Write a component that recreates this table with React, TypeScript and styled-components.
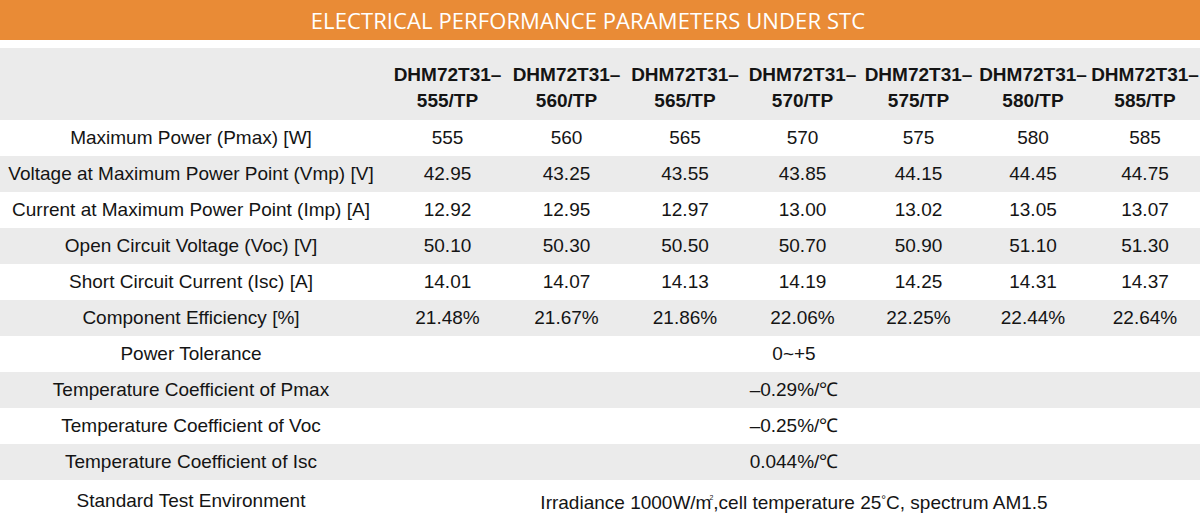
import { createGlobalStyle } from "styled-components"
import styled from "styled-components"

const GlobalStyle = createGlobalStyle`
  html, body {
    margin: 0;
    padding: 0;
    background: #ffffff;
  }
  body {
    font-family: "Liberation Sans", Arial, sans-serif;
    color: #141414;
  }
`

const Page = styled.div`
  width: 1200px;
  height: 520px;
  overflow: hidden;
  background: #fff;
`

const TitleBar = styled.div`
  height: 40px;
  background: #e98b36;
  display: flex;
  align-items: center;
  justify-content: center;
  padding-right: 24px;
  box-sizing: border-box;
`

const Title = styled.h1`
  margin: 0;
  font-family: "Open Sans", "Noto Sans", sans-serif;
  font-weight: 400;
  font-size: 22px;
  color: #fff;
  letter-spacing: 0.1px;
`

const Table = styled.table`
  margin-top: 8px;
  width: 1200px;
  border-collapse: collapse;
  table-layout: fixed;
`

const HeadRow = styled.tr`
  background: #ebebeb;
  height: 72px;
`

const HeadCell = styled.th`
  padding: 14px 0 6px;
  font-size: 19px;
  font-weight: 700;
  line-height: 26px;
  text-align: center;
  white-space: nowrap;
  vertical-align: top;
`

const Row = styled.tr<{ $shade?: boolean }>`
  height: 36px;
  background: ${props => (props.$shade ? "#ebebeb" : "#ffffff")};
`

const Cell = styled.td<{ $label?: boolean }>`
  padding: 0 ${props => (props.$label ? "6px" : "0")} 0 0;
  font-size: 19px;
  line-height: 36px;
  text-align: center;
  white-space: nowrap;
`

const Sup = styled.sup`
  font-size: 7px;
  vertical-align: 9px;
  margin-left: -2px;
`

const Deg = styled.span`
  font-size: 12px;
  vertical-align: 5px;
`

const colWidths = [388, 119, 119, 118, 117, 115, 114, 110]
const models = ["555", "560", "565", "570", "575", "580", "585"]

interface ParamRow {
  label: string
  values: string[]
}

const rows: ParamRow[] = [
  { label: "Maximum Power (Pmax) [W]", values: ["555", "560", "565", "570", "575", "580", "585"] },
  { label: "Voltage at Maximum Power Point (Vmp) [V]", values: ["42.95", "43.25", "43.55", "43.85", "44.15", "44.45", "44.75"] },
  { label: "Current at Maximum Power Point (Imp) [A]", values: ["12.92", "12.95", "12.97", "13.00", "13.02", "13.05", "13.07"] },
  { label: "Open Circuit Voltage (Voc) [V]", values: ["50.10", "50.30", "50.50", "50.70", "50.90", "51.10", "51.30"] },
  { label: "Short Circuit Current (Isc) [A]", values: ["14.01", "14.07", "14.13", "14.19", "14.25", "14.31", "14.37"] },
  { label: "Component Efficiency [%]", values: ["21.48%", "21.67%", "21.86%", "22.06%", "22.25%", "22.44%", "22.64%"] },
]

const spanRows: { label: string; value: React.ReactNode }[] = [
  { label: "Power Tolerance", value: "0~+5" },
  { label: "Temperature Coefficient of Pmax", value: "–0.29%/℃" },
  { label: "Temperature Coefficient of Voc", value: "–0.25%/℃" },
  { label: "Temperature Coefficient of Isc", value: "0.044%/℃" },
  {
    label: "Standard Test Environment",
    value: (
      <>
        Irradiance 1000W/m<Sup>2</Sup>,cell temperature 25<Deg>°</Deg>C, spectrum AM1.5
      </>
    ),
  },
]

export default function App() {
  return (
    <Page>
      <GlobalStyle />
      <TitleBar>
        <Title>ELECTRICAL PERFORMANCE PARAMETERS UNDER STC</Title>
      </TitleBar>
      <Table>
        <colgroup>
          {colWidths.map((w, i) => (
            <col key={i} style={{ width: w }} />
          ))}
        </colgroup>
        <thead>
          <HeadRow>
            <HeadCell />
            {models.map(m => (
              <HeadCell key={m}>
                DHM72T31–
                <br />
                {m}/TP
              </HeadCell>
            ))}
          </HeadRow>
        </thead>
        <tbody>
          {rows.map((r, i) => (
            <Row key={r.label} $shade={i % 2 === 1}>
              <Cell $label>{r.label}</Cell>
              {r.values.map((v, j) => (
                <Cell key={j}>{v}</Cell>
              ))}
            </Row>
          ))}
          {spanRows.map((r, i) => (
            <Row key={r.label} $shade={(rows.length + i) % 2 === 1}>
              <Cell $label>{r.label}</Cell>
              <Cell colSpan={7}>{r.value}</Cell>
            </Row>
          ))}
        </tbody>
      </Table>
    </Page>
  )
}
